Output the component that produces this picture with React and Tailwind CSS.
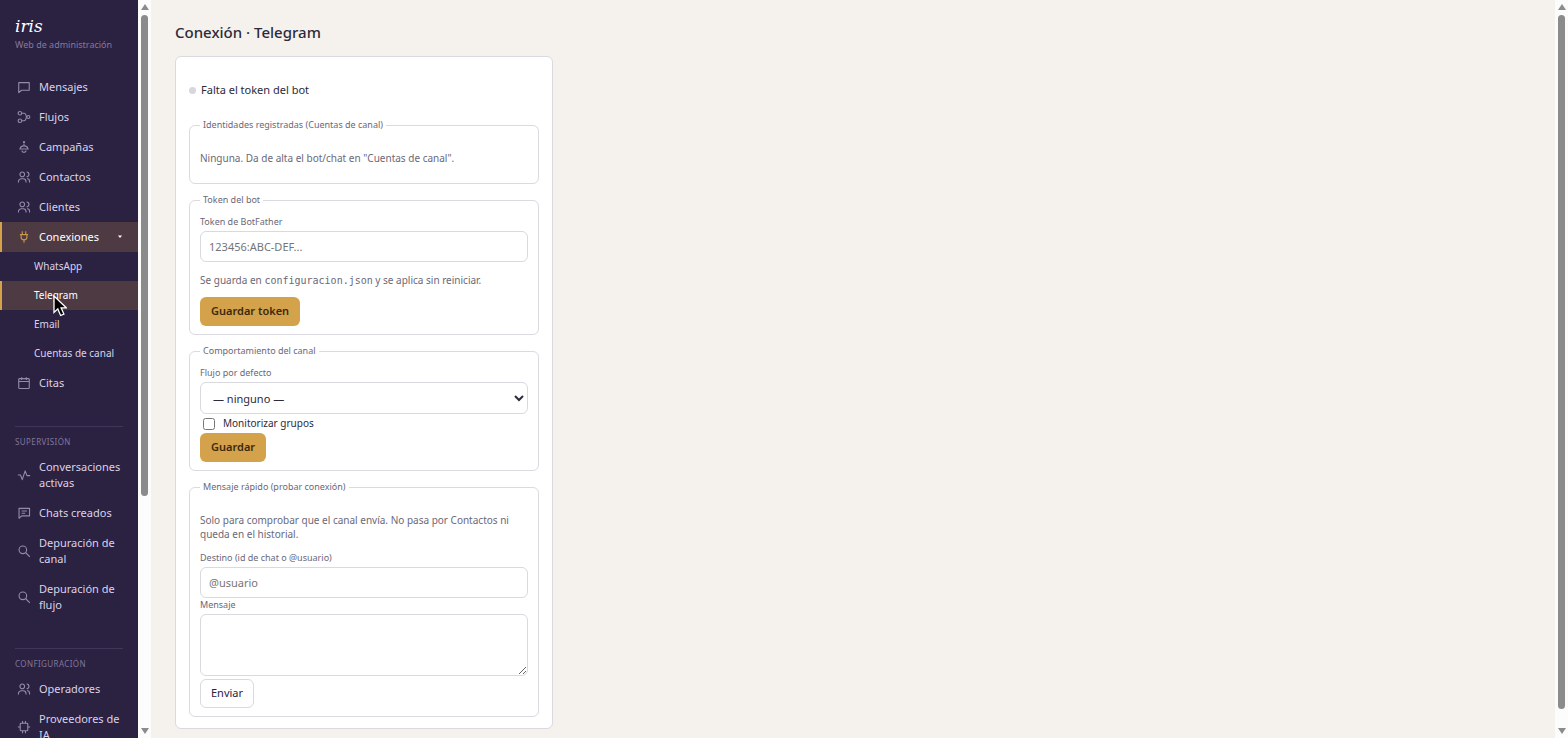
import React from "react";
import clsx from "clsx";

const ICONS = {
  chat: <path d="M3 4.500h18v13H8l-5 4z" />,
  flow: (
    <>
      <circle cx="5" cy="5.500" r="3" />
      <circle cx="5" cy="18.500" r="3" />
      <circle cx="19.500" cy="12" r="2.500" />
      <path d="M8 5.500h4.500c3.500 0 2 5 4.500 6.500M8 18.500h4.500c3.500 0 2-5 4.500-6.500" />
    </>
  ),
  campaign: (
    <>
      <path d="M12 6v4M5.500 15.500a6.500 5.500 0 0 1 13 0zM4 15.500h16M8.500 18a3.500 3 0 0 0 7 0" />
      <circle cx="12" cy="3.500" r="1" />
    </>
  ),
  people: (
    <>
      <circle cx="9" cy="7.500" r="4" />
      <path d="M2.500 21.500v-1.500a5 5 0 0 1 5-5h3a5 5 0 0 1 5 5v1.500M16.500 3.500a4 4 0 0 1 0 8M17.500 14.500c2.500 .5 4 2.500 4 4.500v2.500" />
    </>
  ),
  plug: <path d="M9 2v6M15 2v6M5 8h14M7 8v4a5 5 0 0 0 10 0V8M12 17v5" />,
  calendar: (
    <>
      <rect x="3" y="4.500" width="18" height="17" rx="1.500" />
      <path d="M3 9.500h18M8 2v5M16 2v5" />
    </>
  ),
  activity: <path d="M1.500 12h4.500l3 8 5-15 3 8h5.500" />,
  chatLines: <path d="M3.500 4h18v13H8l-4.500 4zM8 8.500h9M8 12.500h6" />,
  search: (
    <>
      <circle cx="10" cy="10" r="6.500" />
      <path d="m15 15 7 7" />
    </>
  ),
  chip: (
    <>
      <rect x="5.500" y="5.500" width="13" height="13" rx="1.500" />
      <path d="M9.500 1.500v4M14.500 1.500v4M9.500 18.500v4M14.500 18.500v4M1.500 12h4M18.500 12h4" />
    </>
  ),
};

const MAIN_ITEMS = [
  { label: "Mensajes", icon: "chat" },
  { label: "Flujos", icon: "flow" },
  { label: "Campañas", icon: "campaign" },
  { label: "Contactos", icon: "people" },
  { label: "Clientes", icon: "people" },
  {
    label: "Conexiones",
    icon: "plug",
    active: true,
    children: ["WhatsApp", "Telegram", "Email", "Cuentas de canal"],
  },
  { label: "Citas", icon: "calendar" },
];

const SECTIONS = [
  {
    title: "Supervisión",
    items: [
      { label: "Conversaciones activas", icon: "activity" },
      { label: "Chats creados", icon: "chatLines" },
      { label: "Depuración de canal", icon: "search" },
      { label: "Depuración de flujo", icon: "search" },
    ],
  },
  {
    title: "Configuración",
    items: [
      { label: "Operadores", icon: "people" },
      { label: "Proveedores de IA", icon: "chip" },
    ],
  },
];

function Icon({ name, active }) {
  return (
    <svg
      viewBox="0 0 24 24"
      className={clsx("size-3.5 shrink-0", active ? "text-[#c9974a]" : "text-[#938ba9]")}
      fill="none"
      stroke="currentColor"
      strokeWidth="1.9"
      strokeLinejoin="round"
      aria-hidden="true"
    >
      {ICONS[name]}
    </svg>
  );
}

function Pointer() {
  return (
    <svg viewBox="0 0 14 22" className="absolute left-[53px] top-3.5 h-[22px] w-3.5" aria-hidden="true">
      <path
        d="M1 1v16.500l3.800-3.600 2.800 6.600 3.300-1.400-2.800-6.300h5.200z"
        fill="#000"
        stroke="#fff"
        strokeWidth="1.3"
      />
    </svg>
  );
}

function NavItem({ item }) {
  return (
    <li>
      <a
        href="#"
        className={clsx(
          "flex items-center gap-2 border-l-2 py-[7px] pl-[15px] pr-[15px] leading-4",
          item.active ? "border-[#d4a24a] bg-[#4e3a43] text-white" : "border-transparent text-[#d9d3ea]"
        )}
      >
        <Icon name={item.icon} active={item.active} />
        <span className="flex-1">{item.label}</span>
        {item.children && (
          <svg viewBox="0 0 6 4" className="h-1 w-1.5" fill="currentColor" aria-hidden="true">
            <path d="M1 .5h4L3 3z" />
          </svg>
        )}
      </a>
      {item.children && (
        <ul>
          {item.children.map((child) => (
            <li key={child} className="relative">
              <a
                href="#"
                className={clsx(
                  "block border-l-2 py-1.5 pl-8 text-[10px] leading-[17px]",
                  child === "Telegram"
                    ? "border-[#d4a24a] bg-[#4e3a43] text-white"
                    : "border-transparent text-[#d9d3ea]"
                )}
              >
                {child}
              </a>
              {child === "Telegram" && <Pointer />}
            </li>
          ))}
        </ul>
      )}
    </li>
  );
}

function Sidebar() {
  return (
    <aside className="w-[138px] shrink-0 overflow-hidden bg-[#2b2141] text-[11px]">
      <div className="px-[15px] pb-5 pt-4">
        <div className="font-['DejaVu_Serif',serif] text-[17px] italic leading-5 text-white">iris</div>
        <div className="pt-0.5 text-[9px] leading-3.5 text-[#8379a0]">Web de administración</div>
      </div>
      <nav>
        <ul>
          {MAIN_ITEMS.map((item) => (
            <NavItem key={item.label} item={item} />
          ))}
        </ul>
        {SECTIONS.map((section) => (
          <section key={section.title} className="pt-7">
            <h2 className="mx-[15px] border-t border-[#40365a] pb-1 pt-[9px] text-[8px] uppercase leading-3 tracking-wider text-[#81779c]">
              {section.title}
            </h2>
            <ul>
              {section.items.map((item) => (
                <NavItem key={item.label} item={item} />
              ))}
            </ul>
          </section>
        ))}
      </nav>
    </aside>
  );
}

function ScrollTrack({ thumb }) {
  return (
    <div className="flex w-[13px] shrink-0 flex-col items-center bg-[#fcfcfc] py-1" aria-hidden="true">
      <svg viewBox="0 0 8 6" className="h-1.5 w-2 shrink-0" fill="#8b8b8b">
        <path d="M4 0l4 6H0z" />
      </svg>
      <div className="flex-1 py-[5px]">
        <div className={clsx("w-[7px] rounded-full bg-[#8b8b8b]", thumb)} />
      </div>
      <svg viewBox="0 0 8 6" className="h-1.5 w-2 shrink-0" fill="#8b8b8b">
        <path d="M4 6L0 0h8z" />
      </svg>
    </div>
  );
}

function Group({ title, children }) {
  return (
    <fieldset className="rounded-md border border-[#dadae0] px-2.5 py-2">
      <legend className="px-[3px] text-[9px] leading-3.5 text-[#6b6878]">{title}</legend>
      {children}
    </fieldset>
  );
}

const fieldClass =
  "block w-full rounded-md border border-[#d9d9df] bg-white px-2 text-[11px] text-[#2d2a3a] placeholder:text-[#757575]";
const labelClass = "block pb-0.5 text-[9px] leading-3.5 text-[#6b6878]";
const hintClass = "mb-2.5 mt-[11px] text-[10px] leading-3.5 text-[#6b6878]";
const primaryClass =
  "block h-[29px] rounded-md bg-[#d4a24a] px-[11px] text-[11px] font-semibold text-[#3a2a10]";

export default function App() {
  return (
    <div className="flex h-screen overflow-hidden bg-[#f5f2ed] font-['Noto_Sans',sans-serif] text-[#2d2a3a]">
      <Sidebar />
      <ScrollTrack thumb="h-[68%]" />
      <main className="min-w-0 flex-1 overflow-hidden px-6 pt-[21px]">
        <h1 className="pb-[13px] text-[15px] font-medium leading-[22px]">Conexión · Telegram</h1>
        <form className="max-w-[378px] rounded-md border border-[#dadae0] bg-white px-[13px] pb-[11px] pt-[13px]">
          <p className="mb-5 mt-3 flex items-center gap-[5px] text-[11px] leading-4">
            <span className="size-[7px] rounded-full bg-[#d6d6de]" />
            Falta el token del bot
          </p>
          <div className="flex flex-col gap-[9px]">
            <Group title="Identidades registradas (Cuentas de canal)">
              <p className={hintClass}>Ninguna. Da de alta el bot/chat en "Cuentas de canal".</p>
            </Group>

            <Group title="Token del bot">
              <label htmlFor="token" className={labelClass}>
                Token de BotFather
              </label>
              <input id="token" type="text" placeholder="123456:ABC-DEF..." className={clsx(fieldClass, "h-[31px]")} />
              <p className={hintClass}>
                Se guarda en{" "}
                <code className="font-['DejaVu_Sans_Mono',monospace] text-[10px] leading-none">configuracion.json</code> y
                se aplica sin reiniciar.
              </p>
              <button type="button" className={primaryClass}>
                Guardar token
              </button>
            </Group>

            <Group title="Comportamiento del canal">
              <label htmlFor="flow" className={labelClass}>
                Flujo por defecto
              </label>
              <select id="flow" className={clsx(fieldClass, "h-8")}>
                <option>— ninguno —</option>
              </select>
              <label className="flex h-[19px] items-center gap-2 pl-[3px] text-[10px]">
                <input type="checkbox" className="size-3" />
                Monitorizar grupos
              </label>
              <button type="button" className={primaryClass}>
                Guardar
              </button>
            </Group>

            <Group title="Mensaje rápido (probar conexión)">
              <p className={hintClass}>
                Solo para comprobar que el canal envía. No pasa por Contactos ni queda en el historial.
              </p>
              <label htmlFor="target" className={labelClass}>
                Destino (id de chat o @usuario)
              </label>
              <input id="target" type="text" placeholder="@usuario" className={clsx(fieldClass, "h-[31px]")} />
              <label htmlFor="message" className={labelClass}>
                Mensaje
              </label>
              <textarea id="message" className={clsx(fieldClass, "mb-[3px] h-[62px] resize-y")} />
              <button
                type="button"
                className="block h-[29px] rounded-md border border-[#d9d9df] bg-white px-2.5 text-[11px] text-[#2b2141]"
              >
                Enviar
              </button>
            </Group>
          </div>
        </form>
      </main>
      <ScrollTrack thumb="h-[98%]" />
    </div>
  );
}
